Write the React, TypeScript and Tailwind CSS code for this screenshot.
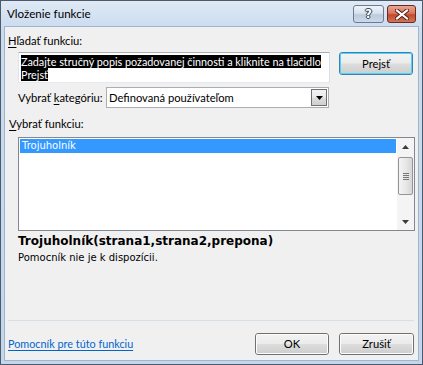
import React from "react";

function WinButton({ label, def, className = "" }: { label: React.ReactNode; def?: boolean; className?: string }) {
  return (
    <div
      className={
        "flex items-center justify-center rounded-[3px] border " +
        (def ? "border-[#3c7fb1] " : "border-[#707070] ") +
        className
      }
    >
      <div
        className={
          "flex h-full w-full items-center justify-center rounded-[2px] border text-black " +
          (def ? "border-[#48d7fb] " : "border-[#fcfcfc] ") +
          "bg-[linear-gradient(to_bottom,#f2f2f2_0%,#ebebeb_48%,#dddddd_52%,#cfcfcf_100%)]"
        }
      >
        {label}
      </div>
    </div>
  );
}

export default function App() {
  return (
    <div className="whitespace-nowrap font-['Lato','Noto_Sans',sans-serif] text-[11.2px] leading-[15px] text-black">
      <div className="flex h-[365px] w-[423px] flex-col border border-[#4c5a6c] bg-[linear-gradient(to_bottom,#dfe9f5_0px,#cbdcef_26px,#c3d6ec_100%)]">
        {/* title bar */}
        <div className="flex h-[25px] items-center pl-[6px] pr-[6px]">
          <div className="text-[11.6px] leading-[15px] text-black">Vloženie funkcie</div>
          <div className="ml-auto flex items-center gap-[3px] self-start pt-[4px]">
            <div className="flex h-[18px] w-[31px] items-center justify-center rounded-[3px] border border-[#6c7b8f] bg-[linear-gradient(to_bottom,#eef3f9_0%,#d8e3ef_45%,#bccbdc_55%,#cbd9e8_100%)]">
              <span className="font-['DejaVu_Sans',sans-serif] text-[12px] font-bold leading-[12px] text-white [text-shadow:0_0_1px_#233,1px_0_0_#334a5f,-1px_0_0_#334a5f,0_1px_0_#334a5f,0_-1px_0_#334a5f]">
                ?
              </span>
            </div>
            <div className="flex h-[18px] w-[29px] items-center justify-center rounded-[3px] border border-[#6b2a20] bg-[linear-gradient(to_bottom,#e8a493_0%,#d9785f_45%,#c24a2e_55%,#d27458_100%)]">
              <svg width="14" height="11" viewBox="0 0 14 11">
                <path d="M2 1.5 L12 9.5 M12 1.5 L2 9.5" stroke="#4a1a10" strokeWidth="4" strokeLinecap="square" />
                <path d="M2 1.5 L12 9.5 M12 1.5 L2 9.5" stroke="#ffffff" strokeWidth="2.2" strokeLinecap="square" />
              </svg>
            </div>
          </div>
        </div>

        {/* body */}
        <div className="mx-[3px] mb-[3px] flex flex-1 flex-col border border-[#9fb4cf] bg-[#f0f0f0] pl-[3px]">
          <div className="mt-[6px] h-[15px]">
            <span className="underline decoration-1 underline-offset-2">H</span>ľadať funkciu:
          </div>

          <div className="mt-[4px] flex items-start">
            <div className="ml-[10px] h-[31px] w-[312px] overflow-hidden border border-[#abadb3] border-b-[#e3e9ef] border-l-[#e2e3ea] border-r-[#dbdfe6] bg-white px-[2px] pt-[2px] text-[10.8px] leading-[13px]">
              <div>
                <span className="bg-black text-white">Zadajte stručný popis požadovanej činnosti a kliknite na tlačidlo</span>
              </div>
              <div>
                <span className="bg-black text-white">Prejsť</span>
              </div>
            </div>
            <WinButton label="Prejsť" def className="ml-[9px] h-[23px] w-[74px]" />
          </div>

          <div className="mt-[4px] flex h-[21px] items-center">
            <div className="ml-[10px] w-[88px]">
              Vybrať <span className="underline decoration-1 underline-offset-2">k</span>ategóriu:
            </div>
            <div className="flex h-[21px] w-[223px] items-center border border-[#abadb3] bg-white pl-[2px]">
              <span>Definovaná používateľom</span>
              <div className="ml-auto mr-[1px] flex h-[17px] w-[16px] items-center justify-center border border-[#707070] bg-[linear-gradient(to_bottom,#f2f2f2_0%,#ebebeb_48%,#dddddd_52%,#cfcfcf_100%)]">
                <svg width="7" height="4" viewBox="0 0 7 4">
                  <path d="M0 0 H7 L3.5 4 Z" fill="#000" />
                </svg>
              </div>
            </div>
          </div>

          <div className="mt-[8px] h-[15px] pl-[1px]">
            <span className="underline decoration-1 underline-offset-2">V</span>ybrať funkciu:
          </div>

          <div className="ml-[10px] mt-[6px] flex h-[94px] w-[397px] border border-[#828790] bg-white">
            <div className="flex-1 p-[1px]">
              <div className="h-[14px] bg-[#3399ff] pl-[2px] font-['DejaVu_Sans',sans-serif] text-[10px] leading-[14px] text-white">
                Trojuholník
              </div>
            </div>
            <div className="flex w-[17px] flex-col items-center bg-[#f4f4f4]">
              <div className="flex h-[17px] items-center justify-center">
                <svg width="7" height="4" viewBox="0 0 7 4">
                  <path d="M0 4 H7 L3.5 0 Z" fill="#3b3b3b" />
                </svg>
              </div>
              <div className="mt-[2px] flex h-[38px] w-[15px] items-center justify-center rounded-[2px] border border-[#959595] bg-[linear-gradient(to_right,#f3f3f3,#e8e8e8_50%,#d6d6d6)]">
                <div className="flex flex-col gap-[1px]">
                  <div className="h-[1px] w-[6px] bg-[#777]" />
                  <div className="h-[1px] w-[6px] bg-[#777]" />
                  <div className="h-[1px] w-[6px] bg-[#777]" />
                  <div className="h-[1px] w-[6px] bg-[#777]" />
                </div>
              </div>
              <div className="mt-auto flex h-[17px] items-center justify-center">
                <svg width="7" height="4" viewBox="0 0 7 4">
                  <path d="M0 0 H7 L3.5 4 Z" fill="#3b3b3b" />
                </svg>
              </div>
            </div>
          </div>

          <div className="ml-[10px] mt-[3px] h-[15px] font-['DejaVu_Sans',sans-serif] text-[12px] font-bold leading-[15px]">
            Trojuholník(strana1,strana2,prepona)
          </div>
          <div className="ml-[10px] mt-[1px] h-[15px] font-['DejaVu_Sans',sans-serif] text-[10px] leading-[15px]">
            Pomocník nie je k dispozícii.
          </div>

          <div className="flex-1" />

          <div className="mr-[4px] h-[1px] bg-[#d5dfe5]" />
          <div className="mb-[6px] mt-[12px] flex h-[21px] items-center">
            <span className="text-[10.8px] text-[#0066cc] underline decoration-1 underline-offset-2">Pomocník pre túto funkciu</span>
            <WinButton label="OK" className="ml-auto h-[22px] w-[74px]" />
            <WinButton label="Zrušiť" className="ml-[10px] mr-[4px] h-[22px] w-[75px]" />
          </div>
        </div>
      </div>
    </div>
  );
}
